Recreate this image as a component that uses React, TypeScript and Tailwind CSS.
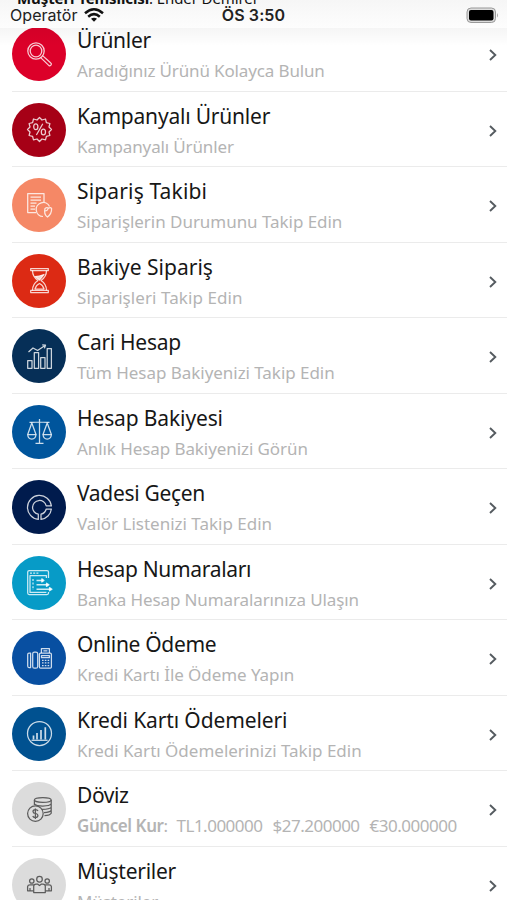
import React from "react";

interface MenuItem {
  title: string;
  titleClass: string;
  text: React.ReactNode;
  textClass: string;
  circle: string;
  icon: React.ReactNode;
}

const menuItems: MenuItem[] = [
  {
    title: "Ürünler",
    titleClass: "tracking-[-0.3px]",
    text: "Aradığınız Ürünü Kolayca Bulun",
    textClass: "tracking-[-0.14px]",
    circle: "bg-[#dc0029] text-white/80",
    icon: (
      <>
        <circle cx="9" cy="9" r="8.2" />
        <circle cx="9" cy="9" r="5.8" />
        <path d="M13.7 15.6 L22 23.6 Q23.4 24.2 24.2 22.8 Q24.8 21.8 23.8 21 L15.6 13.6" />
      </>
    ),
  },
  {
    title: "Kampanyalı Ürünler",
    titleClass: "tracking-[-0.2px]",
    text: "Kampanyalı Ürünler",
    textClass: "tracking-[-0.14px]",
    circle: "bg-[#a60016] text-white/80",
    icon: (
      <>
        <path d="M12.5 .5 L15 3 L18.5 2 L19.4 5.6 L22.9 6.5 L22 10 L24.5 12.5 L22 15 L22.9 18.5 L19.4 19.4 L18.5 22.9 L15 22 L12.5 24.5 L10 22 L6.5 22.9 L5.6 19.4 L2.1 18.5 L3 15 L.5 12.5 L3 10 L2.1 6.5 L5.6 5.6 L6.5 2 L10 3 Z" />
        <ellipse cx="8.8" cy="9.8" rx="2.1" ry="2.9" />
        <ellipse cx="16.4" cy="15" rx="2.1" ry="2.9" />
        <path d="M15.8 6.8 L9.4 18" />
      </>
    ),
  },
  {
    title: "Sipariş Takibi",
    titleClass: "tracking-[0.15px]",
    text: "Siparişlerin Durumunu Takip Edin",
    textClass: "tracking-[-0.04px]",
    circle: "bg-[#f58866] text-white/80",
    icon: (
      <>
        <path d="M9 19.5 H.7 V.5 H17 V9" />
        <path d="M3.5 4 H14 M3.5 7 H14 M3.5 10 H9.5 M3.5 13 H8 M3.5 16 H8" />
        <path d="M22.5 13.5 A7 7 0 1 0 16 23.5" />
        <path d="M18 15.5 Q20 14 21.4 15.4 Q23.4 13.6 24.6 15.6 Q24.8 21 20.5 24 Q16.5 21.5 18 15.5 Z M21.4 15.4 Q20.6 17.6 18.2 18" />
      </>
    ),
  },
  {
    title: "Bakiye Sipariş",
    titleClass: "tracking-[0px]",
    text: "Siparişleri Takip Edin",
    textClass: "tracking-[0.08px]",
    circle: "bg-[#dc2a14] text-white/80",
    icon: (
      <>
        <path d="M3.7 .5 H21.3 V2.6 H3.7 Z M3.7 22.4 H21.3 V24.5 H3.7 Z" />
        <path d="M5.5 2.6 Q5.5 9 11 12.5 Q5.5 16 5.5 22.4 M19.5 2.6 Q19.5 9 14 12.5 Q19.5 16 19.5 22.4" />
        <path d="M8 8.5 Q12 8.5 17 6.5 L12.5 12 Z" fill="currentColor" />
        <path d="M8 21 Q9 17 12.5 15.5 Q16 17 17 21 Z" />
      </>
    ),
  },
  {
    title: "Cari Hesap",
    titleClass: "tracking-[-0.3px]",
    text: "Tüm Hesap Bakiyenizi Takip Edin",
    textClass: "tracking-[-0.04px]",
    circle: "bg-[#062f57] text-white/80",
    icon: (
      <>
        <path d="M.7 24.3 V16.5 H5 V24.3 Z M7.3 24.3 V8.5 H11.6 V24.3 Z M13.7 24.3 V13.5 H18 V24.3 Z M20.2 24.3 V4.5 H24.4 V24.3 Z" />
        <path d="M1.5 8 L6 4 L10.6 6.5 L18 1.6 M15.2 .8 L18.5 1.2 L17.4 4.4" />
      </>
    ),
  },
  {
    title: "Hesap Bakiyesi",
    titleClass: "tracking-[-0.13px]",
    text: "Anlık Hesap Bakiyenizi Görün",
    textClass: "tracking-[-0.08px]",
    circle: "bg-[#00559c] text-white/80",
    icon: (
      <>
        <path d="M12.5 0 V24 M8.5 24.3 H16.5 M2.5 3.4 Q7 3.6 12.5 3 Q18 3.6 22.5 3.4" />
        <path d="M4.8 4 L.7 15.5 H9 Z M20.2 4 L16 15.5 H24.4 Z" />
        <path d="M.7 15.5 Q1 20 4.8 20 Q8.6 20 9 15.5 M16 15.5 Q16.4 20 20.2 20 Q24 20 24.4 15.5" />
      </>
    ),
  },
  {
    title: "Vadesi Geçen",
    titleClass: "tracking-[-0.32px]",
    text: "Valör Listenizi Takip Edin",
    textClass: "tracking-[0px]",
    circle: "bg-[#001b4d] text-white/80",
    icon: (
      <>
        <path d="M24.4 10.9 A12 12 0 1 0 11.3 24.4 V19.2 A6.9 6.9 0 1 1 19.2 10.9 Z" />
        <path d="M14 24.4 A12 12 0 0 0 24.4 14 H19.2 A6.9 6.9 0 0 1 14 19.2 Z" />
      </>
    ),
  },
  {
    title: "Hesap Numaraları",
    titleClass: "tracking-[-0.32px]",
    text: "Banka Hesap Numaralarınıza Ulaşın",
    textClass: "tracking-[-0.11px]",
    circle: "bg-[#079bc7] text-white/80",
    icon: (
      <>
        <path d="M21.5 8 V2 Q21.5 .5 20 .5 H2.2 Q.7 .5 .7 2 V23 Q.7 24.5 2.2 24.5 H20 Q21.5 24.5 21.5 23 V22" />
        <path d="M19.4 8 V5.7 H3 V22.4 H19.4 M3 3 H5 M6.2 3 H8.2 M9.4 3 H11.4" />
        <path d="M6 9 V20" strokeDasharray="2 1.6" />
        <path d="M9.5 10.4 H16 M9.5 14.8 H21 M9.5 19.2 H24" strokeWidth="1.5" />
        <path d="M14.8 8.8 L17 10.4 L14.8 12 Z M19.5 13.2 L22 14.8 L19.5 16.4 Z M22.5 17.6 L25 19.2 L22.5 20.8 Z" fill="currentColor" />
      </>
    ),
  },
  {
    title: "Online Ödeme",
    titleClass: "tracking-[-0.32px]",
    text: "Kredi Kartı İle Ödeme Yapın",
    textClass: "tracking-[-0.07px]",
    circle: "bg-[#084fa1] text-white/80",
    icon: (
      <>
        <path d="M3.6 7 H2 Q.7 7 .7 8.5 V20 Q.7 21.5 2 21.5 H3.6 Z" />
        <rect x="5.7" y="6" width="5" height="16.2" rx="1.8" />
        <path d="M14.4 7 V2.5 H22.4 V7 M16.4 4.8 H20.4" />
        <rect x="12.4" y="7" width="12" height="15.2" rx="1.2" />
        <path d="M14.5 9.5 H22.4 V11.7 H14.5 Z M15 14.3 H16.6 M17.8 14.3 H19.4 M20.6 14.3 H22.2 M15 16.9 H16.6 M17.8 16.9 H19.4 M20.6 16.9 H22.2 M15 19.6 H16.6 M17.8 19.6 H19.4 M20.6 19.6 H22.2" />
      </>
    ),
  },
  {
    title: "Kredi Kartı Ödemeleri",
    titleClass: "tracking-[-0.12px]",
    text: "Kredi Kartı Ödemelerinizi Takip Edin",
    textClass: "tracking-[0px]",
    circle: "bg-[#005190] text-white/80",
    icon: (
      <>
        <circle cx="12.5" cy="12.5" r="12" />
        <path d="M6.5 18.6 V14.5 M10 18.6 V12 M14 18.6 V9 M18.3 18.6 V6.3" strokeWidth="1.7" />
        <path d="M4.5 19.3 H20.6" />
      </>
    ),
  },
  {
    title: "Döviz",
    titleClass: "tracking-[-0.4px]",
    text: (
      <span className="flex whitespace-pre">
        <b className="font-semibold tracking-[-0.45px]">Güncel Kur</b>
        <span>:</span>
        <span className="ml-[9px]">TL1.000000</span>
        <span className="ml-[10px]">$27.200000</span>
        <span className="ml-[10px]">€30.000000</span>
      </span>
    ),
    textClass: "tracking-[-0.5px]",
    circle: "bg-[#dcdcdc] text-[#5c5c5c]",
    icon: (
      <>
        <ellipse cx="15.8" cy="3" rx="8.4" ry="2.4" />
        <path d="M7.4 3 V8 M24.2 3 V16.2 Q23 18.4 17.5 18.6 M7.4 6.8 Q9 9 15.8 9 Q23 9 24.2 6.8 M15 12.4 Q23 12.2 24.2 10.2 M17 15.6 Q23 15.4 24.2 13.4" />
        <circle cx="8.4" cy="16.6" r="7.8" />
        <path d="M11 14 Q10.4 12.7 8.4 12.7 Q5.9 12.9 6 14.6 Q6.2 16.2 8.4 16.5 Q10.9 16.9 10.9 18.6 Q10.8 20.4 8.4 20.5 Q6.2 20.5 5.8 19 M8.4 11.4 V22" />
      </>
    ),
  },
  {
    title: "Müşteriler",
    titleClass: "tracking-[-0.25px]",
    text: "Müşteriler",
    textClass: "tracking-[-0.1px]",
    circle: "bg-[#dcdcdc] text-[#5c5c5c]",
    icon: (
      <>
        <circle cx="12.5" cy="7.2" r="2.8" />
        <circle cx="4.8" cy="9" r="2.2" />
        <circle cx="20.2" cy="9" r="2.2" />
        <path d="M6.7 20.6 V14.2 Q6.7 12 9 12 H10.5 L12.5 13.6 L14.5 12 H16 Q18.3 12 18.3 14.2 V20.6 Z" />
        <path d="M6.7 18.8 H.6 V14.6 Q.8 12.8 3 12.8 H6.8 M18.3 18.8 H24.4 V14.6 Q24.2 12.8 22 12.8 H18.2 M3 18.8 V16 M22 18.8 V16" />
      </>
    ),
  },
];

const StatusBar = () => {
  return (
    <header className="relative h-7 overflow-hidden bg-gradient-to-b from-[#f6f6f6] to-[#fdfdfd] text-[#222]">
      <p className="absolute -top-[12px] left-[17px] whitespace-nowrap font-['Noto_Sans'] text-[15px] leading-[20px] tracking-[-0.1px] text-[#111]">
        <b>Müşteri Temsilcisi</b>: Ender Demirel
      </p>
      <div className="relative grid h-[30px] grid-cols-3 items-center px-[10px] font-[Inter,sans-serif]">
        <div className="flex items-center gap-[7px]">
          <span className="text-[16px] tracking-[0.05px]">Operatör</span>
          <svg width="20" height="14" viewBox="0 0 20 14" fill="none" stroke="#111" strokeWidth="2.5">
            <path d="M1 5.2 Q10 -2.6 19 5.2" />
            <path d="M4.2 8.7 Q10 3.6 15.8 8.7" />
            <path d="M7 10.8 Q10 8.5 13 10.8 L10 13.8 Z" fill="#111" stroke="none" />
          </svg>
        </div>
        <span className="text-center text-[16px] font-semibold tracking-[0.1px]">
          ÖS 3:50
        </span>
        <svg className="-mr-[3px] justify-self-end" width="34" height="17" viewBox="0 0 34 17">
          <rect x="1" y="1" width="28.5" height="14.5" rx="4" fill="#ddd" stroke="#999" />
          <rect x="3" y="3" width="24.5" height="10.5" rx="2" fill="#000" />
          <path d="M31 6 Q33 8.3 31 10.5 Z" fill="#aaa" />
        </svg>
      </div>
    </header>
  );
};

const MenuRow = ({ item }: { item: MenuItem }) => {
  return (
    <li className="ml-3 flex h-[75.5px] shrink-0 items-center border-b-[1.5px] border-[#ebebeb] pt-[2px] pr-[9px]">
      <div
        className={`flex size-[54px] shrink-0 items-center justify-center rounded-full ${item.circle}`}
      >
        <svg
          width="25"
          height="25"
          viewBox="0 0 25 25"
          fill="none"
          stroke="currentColor"
          strokeWidth="1.25"
          strokeLinejoin="round"
          className="overflow-visible"
        >
          {item.icon}
        </svg>
      </div>
      <div className="ml-[11px] flex-1 whitespace-nowrap pt-[2px] font-['Noto_Sans',sans-serif]">
        <h2 className={`text-[21px] leading-[30px] text-[#171717] ${item.titleClass}`}>
          <span>{item.title}</span>
        </h2>
        <div className={`mt-[2px] text-[17px] leading-[28px] text-[#b4b4b4] ${item.textClass}`}>
          <span>{item.text}</span>
        </div>
      </div>
      <svg
        width="10"
        height="12"
        viewBox="0 0 10 12"
        fill="none"
        stroke="#555b60"
        strokeWidth="1.9"
        className="mt-[2px]"
      >
        <path d="M2 1 L7.3 6 L2 11" />
      </svg>
    </li>
  );
};

const App = () => {
  return (
    <main className="flex h-[900px] w-full flex-col overflow-hidden bg-white">
      <div className="z-10 shrink-0">
        <StatusBar />
        <div className="-mb-[18px] h-[18px] bg-gradient-to-b from-black/4 to-transparent" />
      </div>
      <ul className="-mt-3 flex flex-col">
        {menuItems.map((item) => (
          <MenuRow key={item.title} item={item} />
        ))}
      </ul>
    </main>
  );
};

export default App;
